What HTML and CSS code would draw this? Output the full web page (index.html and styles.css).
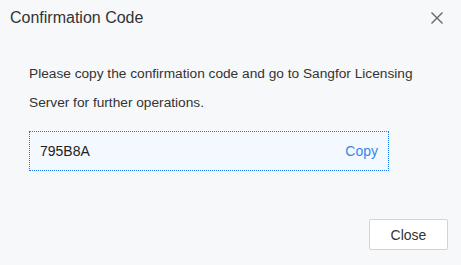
FILE: index.html
```html
<!DOCTYPE html>
<html lang="en">
<head>
<meta charset="UTF-8">
<meta name="viewport" content="width=device-width, initial-scale=1.0">
<title>Confirmation Code</title>
<link rel="stylesheet" href="styles.css">
</head>
<body>
<div class="dialog">
  <div class="dialog-header">
    <span class="dialog-title">Confirmation Code</span>
    <span class="dialog-close">
      <svg width="12" height="12" viewBox="0 0 12 12"><path d="M0.5 0.5 L11.5 11.5 M11.5 0.5 L0.5 11.5" stroke="#666" stroke-width="1.4" fill="none"/></svg>
    </span>
  </div>
  <div class="dialog-body">
    <p class="tip">Please copy the confirmation code and go to Sangfor Licensing Server for further operations.</p>
    <div class="code-box">
      <span class="code">795B8A</span>
      <a class="copy" href="#">Copy</a>
    </div>
  </div>
  <div class="dialog-footer">
    <button class="btn">Close</button>
  </div>
</div>
</body>
</html>
```

FILE: styles.css
```css
html, body {
  margin: 0;
  padding: 0;
}
body {
  font-family: Arial, "Liberation Sans", sans-serif;
  background: #f7f8fa;
  color: #333;
  width: 461px;
  height: 265px;
  overflow: hidden;
}
.dialog {
  display: flex;
  flex-direction: column;
  height: 265px;
}
.dialog-header {
  display: flex;
  align-items: center;
  justify-content: space-between;
  height: 36px;
  padding: 0 18px 0 10px;
}
.dialog-title {
  font-size: 16px;
  color: #333;
}
.dialog-close {
  display: flex;
  width: 12px;
  height: 12px;
  cursor: pointer;
}
.dialog-body {
  padding: 23px 29px 0 29px;
}
.tip {
  margin: 0;
  width: 400px;
  font-size: 13.7px;
  line-height: 29px;
  color: #333;
}
.code-box {
  display: flex;
  align-items: center;
  justify-content: space-between;
  width: 338px;
  height: 38px;
  margin-top: 14px;
  padding: 0 10px;
  border: 1px dotted #1677ff;
  background: #f4f8ff;
  font-size: 14px;
}
.code {
  color: #222;
}
.copy {
  color: #3a86e8;
  text-decoration: none;
}
.dialog-footer {
  display: flex;
  justify-content: flex-end;
  margin-top: auto;
  padding: 0 13px 15px 0;
}
.btn {
  width: 79px;
  height: 31px;
  background: #fff;
  border: 1px solid #cfd4dc;
  border-radius: 2px;
  font-family: Arial, "Liberation Sans", sans-serif;
  font-size: 14px;
  color: #333;
}
```
